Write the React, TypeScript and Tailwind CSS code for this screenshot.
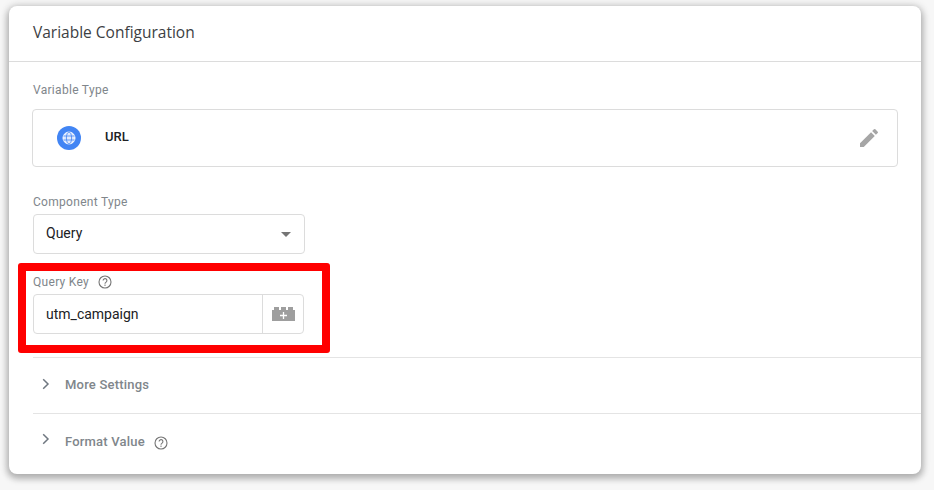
import React from "react";

function Help({ className = "" }: { className?: string }) {
  return (
    <svg width="14" height="14" viewBox="0 0 14 14" className={className} fill="none">
      <circle cx="7" cy="7" r="6" stroke="#757575" strokeWidth="1.1" />
      <path d="M5.1 5.6a1.9 1.9 0 1 1 3 1.5c-.7.5-1.1.8-1.1 1.6" stroke="#757575" strokeWidth="1.1" />
      <rect x="6.4" y="9.6" width="1.2" height="1.2" fill="#757575" />
    </svg>
  );
}

function Chevron() {
  return (
    <svg width="8" height="12" viewBox="0 0 8 12" fill="none" className="shrink-0">
      <path d="M1.2 1.2 6 6l-4.8 4.8" stroke="#6f7780" strokeWidth="1.5" />
    </svg>
  );
}

export default function App() {
  return (
    <div className="h-[490px] w-[934px] overflow-hidden bg-[#f7f7f7] pl-[9px] pt-[6px] font-['Roboto',sans-serif]">
      <div className="h-[468px] w-[912px] rounded-[8px] bg-white shadow-[0_3px_6px_2px_rgba(0,0,0,0.25),0_0_10px_2px_rgba(0,0,0,0.08)]">
        <div className="flex h-[56px] items-center border-b border-[#dcdcdc] pl-[24px] pb-[1px] font-['Open_Sans',sans-serif] text-[15.5px] text-[#3c4043]">
          Variable Configuration
        </div>
        <div className="pl-[24px] pr-[23px]">
          <div className="pt-[20px] text-[12px] leading-[16px] tracking-[0.3px] text-[#80868b]">Variable Type</div>
          <div className="-ml-[1px] mt-[11px] flex h-[58px] items-center rounded-[4px] border border-[#dcdcdc] pl-[24px] pr-[16px]">
            <div className="mb-[1px] flex h-[24px] w-[24px] items-center justify-center rounded-full bg-[#4285f4]">
              <svg width="14" height="14" viewBox="0 0 14 14" fill="none" stroke="#fff" strokeWidth="1">
                <circle cx="7" cy="7" r="6" fill="#dfe9fd" stroke="#fff" />
                <ellipse cx="7" cy="7" rx="2.6" ry="6" stroke="#4285f4" strokeWidth="0.8" />
                <path d="M1.4 5h11.2M1.4 9h11.2" stroke="#4285f4" strokeWidth="0.8" />
              </svg>
            </div>
            <div className="mb-[2px] ml-[24px] text-[13px] font-medium text-[#202124]">URL</div>
            <svg width="24" height="24" viewBox="0 0 24 24" fill="#a6a6a6" className="ml-auto">
              <path d="M3 17.25V21h3.75L17.81 9.94l-3.75-3.75L3 17.25zM20.71 7.04a1 1 0 0 0 0-1.41l-2.34-2.34a1 1 0 0 0-1.41 0l-1.83 1.83 3.75 3.75 1.83-1.83z" />
            </svg>
          </div>

          <div className="mt-[27px] text-[12px] leading-[16px] tracking-[0.3px] text-[#80868b]">Component Type</div>
          <div className="mt-[4px] flex h-[40px] w-[272px] items-center justify-between rounded-[4px] border border-[#dcdcdc] pl-[12px] pr-[13px] text-[14px] text-[#202124]">
            <span className="mb-[2px]">Query</span>
            <div className="h-0 w-0 border-x-[5px] border-t-[5px] border-x-transparent border-t-[#757575]" />
          </div>

          <div className="-ml-[15px] mt-[9px] h-[90px] w-[312px] rounded-[3px] border-[8px] border-[#ff0000] pl-[7px]">
            <div className="flex h-[19px] items-center pt-[3px] text-[12px] tracking-[0.3px] text-[#80868b]">
              Query Key
              <Help className="ml-[9px]" />
            </div>
            <div className="mt-[4px] flex h-[40px] w-[271px] rounded-[4px] border border-[#dcdcdc] text-[14px] text-[#202124]">
              <div className="flex flex-1 items-center pl-[12px]">utm_campaign</div>
              <div className="flex w-[41px] items-center justify-center border-l border-[#dcdcdc]">
                <svg width="23" height="14" viewBox="0 0 23 14">
                  <path d="M0 3h2V0h5v3h2V0h5v3h2V0h5v3h2v11H0z" fill="#9e9e9e" />
                  <path d="M11.5 5v7M8 8.5h7" stroke="#fff" strokeWidth="1.3" />
                </svg>
              </div>
            </div>
          </div>
        </div>

        <div className="ml-[24px] mt-[4px] flex h-[56px] items-center border-t border-[#e4e4e4] pb-[2px] text-[13px] font-medium tracking-[0.2px] text-[#80868b]">
          <span className="ml-[9px] mb-[2px] flex"><Chevron /></span>
          <span className="ml-[15px]">More Settings</span>
        </div>
        <div className="ml-[24px] flex h-[57px] items-center border-t border-[#e4e4e4] text-[13px] font-medium tracking-[0.2px] text-[#80868b]">
          <span className="ml-[9px] mb-[7px] flex"><Chevron /></span>
          <span className="ml-[15px]">Format Value</span>
          <Help className="ml-[9px] mt-[2px]" />
        </div>
      </div>
    </div>
  );
}
